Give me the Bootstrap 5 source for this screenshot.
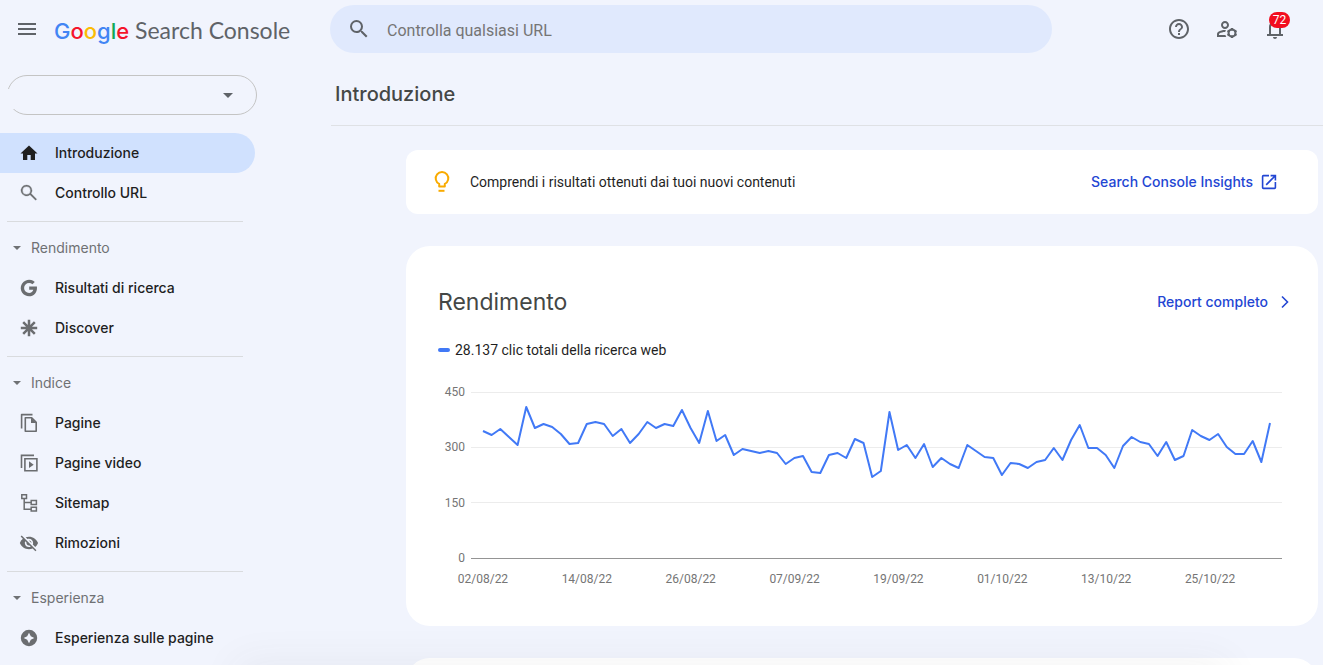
<!DOCTYPE html>
<html lang="it">
<head>
<meta charset="utf-8">
<meta name="viewport" content="width=device-width, initial-scale=1">
<title>Introduzione - Google Search Console</title>
<link href="https://cdn.jsdelivr.net/npm/bootstrap@5.3.0/dist/css/bootstrap.min.css" rel="stylesheet">
<style>
  body { background: #f1f4fd; color: #1f1f1f; font-family: Roboto, sans-serif; font-size: 14px; line-height: 20px; }
  .shell { height: 100vh; }
  .side-col { width: 330px; }
  svg { display: block; flex: none; fill: currentColor; }

  /* top bar */
  .topbar { height: 58px; color: #5f6368; }
  .icon-btn { border: 0; background: none; padding: 0; color: inherit; }
  .logo { font: 23px/28px Lato, sans-serif; color: #5f6368; text-decoration: none; white-space: pre; padding-top: 2px; }
  .g-blue { color: #4285f4; } .g-red { color: #f5142c; } .g-yellow { color: #fbbc05; } .g-green { color: #0fa958; }
  .g-word { font: 500 22px/28px Inter, sans-serif; }
  .url-search { height: 48px; max-width: 722px; background: #e0e9fd; border-radius: 24px; padding-left: 17px; }
  .url-search input { border: 0; background: none; outline: 0; font-size: 16px; line-height: 24px; color: #1f1f1f; }
  .url-search input::placeholder { color: #757575; opacity: 1; }
  .tools { padding-right: 36px; gap: 24px; }
  .count { position: absolute; left: 6px; top: -5px; width: 21px; height: 16px; border-radius: 8px; background: #f20d1f; color: #fff; font-size: 12px; line-height: 16px; text-align: center; }

  /* sidebar */
  .site-pick { margin: 17px 73px 18px 7px; }
  .site-pick select { appearance: none; width: 100%; height: 40px; border: 1px solid #c4c4c4; border-radius: 20px; background: none; }
  .site-pick::before { content: ""; position: absolute; left: 0; top: 14px; width: 7px; height: 20px; background: #f1f4fd; }
  .site-pick svg { position: absolute; right: 17px; top: 8px; pointer-events: none; }
  .side { color: #5f6368; }
  .side a { display: flex; align-items: center; height: 40px; gap: 14px; padding-left: 17px; margin-right: 75px; font: 500 14px/20px Inter, sans-serif; color: #1f1f1f; text-decoration: none; border-radius: 0 20px 20px 0; }
  .side a svg { color: #6b6d70; }
  .side a.current { background: #d0e1fe; }
  .side a.current svg { color: #1f1f1f; }
  .side hr { margin: 8px 87px 6px 7px; border-color: #c9c9c9; opacity: .6; }
  .group { display: flex; align-items: center; gap: 2px; height: 40px; padding: 0 0 0 5px; border: 0; background: none; font: 14px/20px Inter, sans-serif; color: #6f7174; }

  /* content */
  .page-title { font: 500 20px/24px Inter, sans-serif; color: #444746; margin: 0; padding: 24px 4px 19px; }
  .page-head { border-bottom: 1px solid #dfe1e5; margin-left: 1px; }
  .panels { padding: 24px 5px 0 76px; gap: 32px; }
  .panel { background: #fff; }
  .tip { height: 64px; border-radius: 12px; padding: 0 41px 0 24px; }
  .big { border-radius: 24px; padding: 40px 24px 36px 32px; height: 380px; }
  .big h2 { font: 23px/32px Inter, sans-serif; color: #444746; margin: 0; }
  .go { font: 500 14px/20px Inter, sans-serif; color: #2346d3; text-decoration: none; display: flex; align-items: center; }
  .key { width: 12px; height: 4px; border-radius: 2px; background: #4179f6; }
  .legend-row { margin: 22px 0 32px; gap: 5px; }

  /* chart */
  .chart { font-size: 12px; line-height: 16px; color: #757575; padding-right: 12px; }
  .y-axis { display: flex; flex-direction: column; justify-content: space-between; width: 27px; height: 182px; margin: -8px 6px 0 0; text-align: right; }
  .plot { height: 167px; padding: 0 12px; background: linear-gradient(#ececec, #ececec) 0 0/100% 1px no-repeat, linear-gradient(#ececec, #ececec) 0 55px/100% 1px no-repeat, linear-gradient(#ececec, #ececec) 0 110px/100% 1px no-repeat; border-bottom: 1px solid #949494; }
  .plot svg { width: 100%; height: 166px; overflow: visible; }
  .plot polyline { fill: none; stroke: #4179f6; stroke-width: 2; stroke-linejoin: round; vector-effect: non-scaling-stroke; }
  .x-axis { display: grid; grid-template-columns: repeat(8, 1fr); margin: 12px 20px 0 -40px; text-align: center; }
  .bottom-glow { position: fixed; left: 240px; right: 100px; top: 100%; height: 40px; box-shadow: 0 0 40px 4px rgba(60, 64, 67, .06); pointer-events: none; }
</style>
</head>
<body>
<div class="shell d-flex flex-column overflow-hidden">
  <header class="topbar d-flex align-items-center flex-shrink-0">
    <div class="side-col d-flex align-items-center flex-shrink-0">
      <button class="icon-btn ms-3 me-3" type="button" aria-label="Menu"><svg width="22" height="24" viewBox="1 0 22 24"><path d="M3 18h18v-2H3zm0-5h18v-2H3zm0-7v2h18V6z"/></svg></button>
      <a class="logo" href="#"><span class="g-word"><span class="g-blue">G</span><span class="g-red">o</span><span class="g-yellow">o</span><span class="g-blue">g</span><span class="g-green">l</span><span class="g-red">e</span></span> Search Console</a>
    </div>
    <form class="url-search d-flex align-items-center flex-grow-1">
      <svg width="24" height="24" viewBox="0 0 24 24"><path d="M15.500 14h-.79l-.28-.27A6.471 6.471 0 0 0 16 9.500 6.500 6.500 0 1 0 9.500 16c1.610 0 3.090-.59 4.230-1.570l.27.28v.79l5 4.990L20.490 19zm-6 0C7.010 14 5 11.990 5 9.500S7.010 5 9.500 5 14 7.010 14 9.500 11.990 14 9.500 14"/></svg>
      <input class="flex-grow-1 ms-3 p-0 pt-1" type="text" placeholder="Controlla qualsiasi URL" aria-label="Controlla qualsiasi URL">
    </form>
    <div class="tools d-flex align-items-center ms-auto">
      <button class="icon-btn" type="button" aria-label="Guida"><svg width="24" height="24" viewBox="0 0 24 24"><path d="M11 18h2v-2h-2zm1-16C6.480 2 2 6.480 2 12s4.480 10 10 10 10-4.480 10-10S17.520 2 12 2m0 18c-4.410 0-8-3.590-8-8s3.590-8 8-8 8 3.590 8 8-3.590 8-8 8m0-14c-2.210 0-4 1.790-4 4h2c0-1.100.9-2 2-2s2 .9 2 2c0 2-3 1.750-3 5h2c0-2.250 3-2.500 3-5 0-2.210-1.790-4-4-4"/></svg></button>
      <button class="icon-btn" type="button" aria-label="Utenti e autorizzazioni"><svg width="24" height="24" viewBox="0 0 24 24"><path d="M4 18v-.65c0-.34.16-.66.41-.81C6.100 15.530 8.030 15 10 15h.24c.14-.72.370-1.410.68-2.040C10.620 12.980 10.310 13 10 13c-2.420 0-4.680.67-6.610 1.820C2.510 15.340 2 16.320 2 17.350V20h9.260a6.960 6.960 0 0 1-.82-2zM10 12c2.210 0 4-1.790 4-4s-1.790-4-4-4-4 1.790-4 4 1.790 4 4 4m0-6c1.100 0 2 .9 2 2s-.9 2-2 2-2-.9-2-2 .9-2 2-2"/><path fill="none" stroke="currentColor" stroke-width="2" d="M17 12.500a3.500 3.500 0 1 0 0 7 3.500 3.500 0 0 0 0-7"/><path d="M16 11h2l.3 2.500h-2.600zM15.700 18.500h2.600L18 21h-2zM21 12.700l1 1.700-2 1.600-1.300-2.300zM15.300 18.300 13 19.300l-1-1.700 2-1.600zM22 17.600l-1 1.700-2.300-1L20 16zM14 16l-2-1.600 1-1.700 2.300 1z"/></svg></button>
      <button class="icon-btn position-relative" type="button" aria-label="Notifiche"><svg width="24" height="24" viewBox="0 0 24 24"><path d="M12 22c1.100 0 2-.9 2-2h-4c0 1.100.9 2 2 2m8-5v2H4v-2h2v-7c0-2.790 1.910-5.140 4.500-5.800V3.500a1.500 1.500 0 0 1 3 0v.7C16.090 4.860 18 7.210 18 10v7zM8 17h8v-7c0-2.210-1.790-4-4-4s-4 1.790-4 4z"/></svg><span class="count">72</span></button>
    </div>
  </header>

  <div class="d-flex flex-grow-1 overflow-hidden">
    <aside class="side-col side flex-shrink-0">
      <div class="site-pick position-relative">
        <select aria-label="Seleziona proprietà"><option></option></select>
        <svg width="24" height="24" viewBox="0 0 24 24"><path d="m7 10 5 5 5-5z"/></svg>
      </div>
      <nav>
        <a class="current" href="#"><svg width="24" height="24" viewBox="0 0 24 24"><path d="M10.300 19v-5h3.400v5h4.300v-6.500h2.500L12 4.500l-8.500 8H6V19z"/></svg>Introduzione</a>
        <a href="#"><svg width="24" height="24" viewBox="0 0 24 24"><path d="M9.500 4a5.500 5.500 0 1 0 3.500 9.700l5.600 5.600 1.100-1.100-5.600-5.600A5.500 5.500 0 0 0 9.500 4m0 1.500a4 4 0 1 1 0 8 4 4 0 0 1 0-8" stroke="currentColor" stroke-width=".3"/></svg>Controllo URL</a>
        <hr>
        <button class="group" type="button"><svg width="24" height="24" viewBox="0 0 24 24"><path d="m8 10 4 4 4-4z"/></svg>Rendimento</button>
        <a href="#"><svg width="24" height="24" viewBox="0 0 24 24"><path d="M12.200 10.500h7.700c.7 5.600-2.700 9.800-7.800 9.800a8.300 8.300 0 1 1 5.700-14.300l-2.400 2.300A4.900 4.900 0 0 0 12.100 7a5 5 0 1 0 0 10c2.200 0 3.700-1.200 4.200-3.200h-4.100z"/></svg>Risultati di ricerca</a>
        <a href="#"><svg width="24" height="24" viewBox="0 0 24 24"><path d="M12 3.800v16.400M3.800 12h16.400M6.200 6.200l11.600 11.600M17.800 6.200 6.200 17.800" stroke="currentColor" stroke-width="2.500"/></svg>Discover</a>
        <hr>
        <button class="group" type="button"><svg width="24" height="24" viewBox="0 0 24 24"><path d="m8 10 4 4 4-4z"/></svg>Indice</button>
        <a href="#"><svg width="24" height="24" viewBox="0 0 24 24"><g fill="none" stroke="currentColor" stroke-width="1.600"><path d="M4.600 17.500V3.600h10.900M8.300 6.800h6.400l4.500 4.500v9H8.300z" stroke-linejoin="round"/></g><path d="M14 6.500v5.500h5.500z"/></svg>Pagine</a>
        <a href="#"><svg width="24" height="24" viewBox="0 0 24 24"><path d="M4.500 17V4.400H17M7.900 7.700h12v12h-12z" fill="none" stroke="currentColor" stroke-width="1.600"/><path d="m12 10.300 4.700 3.400-4.700 3.400z"/></svg>Pagine video</a>
        <a href="#"><svg width="24" height="24" viewBox="0 0 24 24"><path d="M4.800 3.800h4.700v3.700H4.800zM14.200 9.600h5.200v3.900h-5.200zM14.200 16.200h5.200v3.900h-5.200zM7.200 7.500v10.700h7M7.200 11.500h7" fill="none" stroke="currentColor" stroke-width="1.500"/></svg>Sitemap</a>
        <a href="#"><svg width="24" height="24" viewBox="0 0 24 24"><path d="M12 7c2.760 0 5 2.240 5 5 0 .65-.13 1.260-.36 1.830l2.920 2.920c1.510-1.260 2.700-2.890 3.430-4.750-1.730-4.390-6-7.500-11-7.500-1.400 0-2.740.25-3.980.7l2.160 2.160C10.740 7.130 11.350 7 12 7M2 4.270l2.280 2.280.46.46A11.804 11.804 0 0 0 1 12c1.730 4.390 6 7.500 11 7.500 1.550 0 3.030-.3 4.380-.84l.42.42L19.730 22 21 20.730 3.270 3zM7.530 9.800l1.550 1.550c-.05.210-.08.430-.08.650 0 1.660 1.340 3 3 3 .22 0 .44-.03.65-.08l1.550 1.550c-.67.330-1.410.53-2.200.53-2.760 0-5-2.240-5-5 0-.79.2-1.530.53-2.200m4.310-.78 3.150 3.150.02-.16c0-1.660-1.340-3-3-3z" transform="translate(2 2) scale(.83)"/></svg>Rimozioni</a>
        <hr>
        <button class="group" type="button"><svg width="24" height="24" viewBox="0 0 24 24"><path d="m8 10 4 4 4-4z"/></svg>Esperienza</button>
        <a href="#"><svg width="24" height="24" viewBox="0 0 24 24"><path fill-rule="evenodd" d="M12 3.800a8.200 8.200 0 1 0 0 16.400 8.200 8.200 0 0 0 0-16.400m0 2.900 1.800 3.500 3.500 1.800-3.500 1.800-1.800 3.500-1.800-3.500L6.700 12l3.500-1.800z"/></svg>Esperienza sulle pagine</a>
      </nav>
    </aside>

    <main class="flex-grow-1 overflow-hidden">
      <div class="page-head"><h1 class="page-title">Introduzione</h1></div>
      <div class="panels d-flex flex-column">
        <section class="panel tip d-flex align-items-center">
          <svg width="24" height="24" viewBox="0 0 24 24" stroke="#f9ab00" stroke-width="2"><path fill="none" d="M9.200 16.500v-2.600a6.300 6.300 0 1 1 5.600 0v2.600z" stroke-linejoin="round"/><path d="M8.500 20.800h6"/></svg>
          <span class="ms-3">Comprendi i risultati ottenuti dai tuoi nuovi contenuti</span>
          <a class="go gap-2 ms-auto" href="#">Search Console Insights <svg width="16" height="16" viewBox="2 2 20 20"><path d="M19 19H5V5h7V3H5a2 2 0 0 0-2 2v14a2 2 0 0 0 2 2h14c1.100 0 2-.9 2-2v-7h-2zM14 3v2h3.590l-9.830 9.830 1.410 1.410L19 6.410V10h2V3z"/></svg></a>
        </section>

        <section class="panel big">
          <div class="d-flex align-items-center justify-content-between">
            <h2>Rendimento</h2>
            <a class="go gap-2" href="#">Report completo <svg width="18" height="20" viewBox="2 0 18 20"><path d="m8 4.500 5.500 5.500L8 15.500" fill="none" stroke="currentColor" stroke-width="1.600"/></svg></a>
          </div>
          <div class="legend-row d-flex align-items-center"><span class="key"></span>28.137 clic totali della ricerca web</div>
          <div class="chart d-flex">
            <div class="y-axis"><span>450</span><span>300</span><span>150</span><span>0</span></div>
            <div class="flex-grow-1">
              <div class="plot"><svg viewBox="0 0 91 166" preserveAspectRatio="none" role="img" aria-label="Clic per giorno"><polyline id="clicks"/></svg></div>
              <div class="x-axis"><span>02/08/22</span><span>14/08/22</span><span>26/08/22</span><span>07/09/22</span><span>19/09/22</span><span>01/10/22</span><span>13/10/22</span><span>25/10/22</span></div>
            </div>
          </div>
        </section>

        <section class="panel big"></section>
      </div>
    </main>
  </div>
</div>
<div class="bottom-glow"></div>
<script>
  // One value per day: depth below the 450 gridline, where 166 is zero clicks
  const depth = [39,43,37,45,53,15,36,32,35,42,52,51,32,30,32,44,37,51,42,30,36,32,34,18,36,51,19,49,43,63,57,59,61,59,61,72,66,64,80,81,63,61,66,47,51,85,79,20,58,53,66,52,75,66,72,76,53,59,65,66,83,71,72,76,70,68,56,68,48,33,56,56,63,76,54,45,50,52,64,50,68,64,38,44,48,42,55,62,62,49,70,31];
  document.getElementById('clicks').setAttribute('points', depth.map((d, day) => day + ',' + d).join(' '));
</script>
<script src="https://cdn.jsdelivr.net/npm/bootstrap@5.3.0/dist/js/bootstrap.bundle.min.js"></script>
</body>
</html>
